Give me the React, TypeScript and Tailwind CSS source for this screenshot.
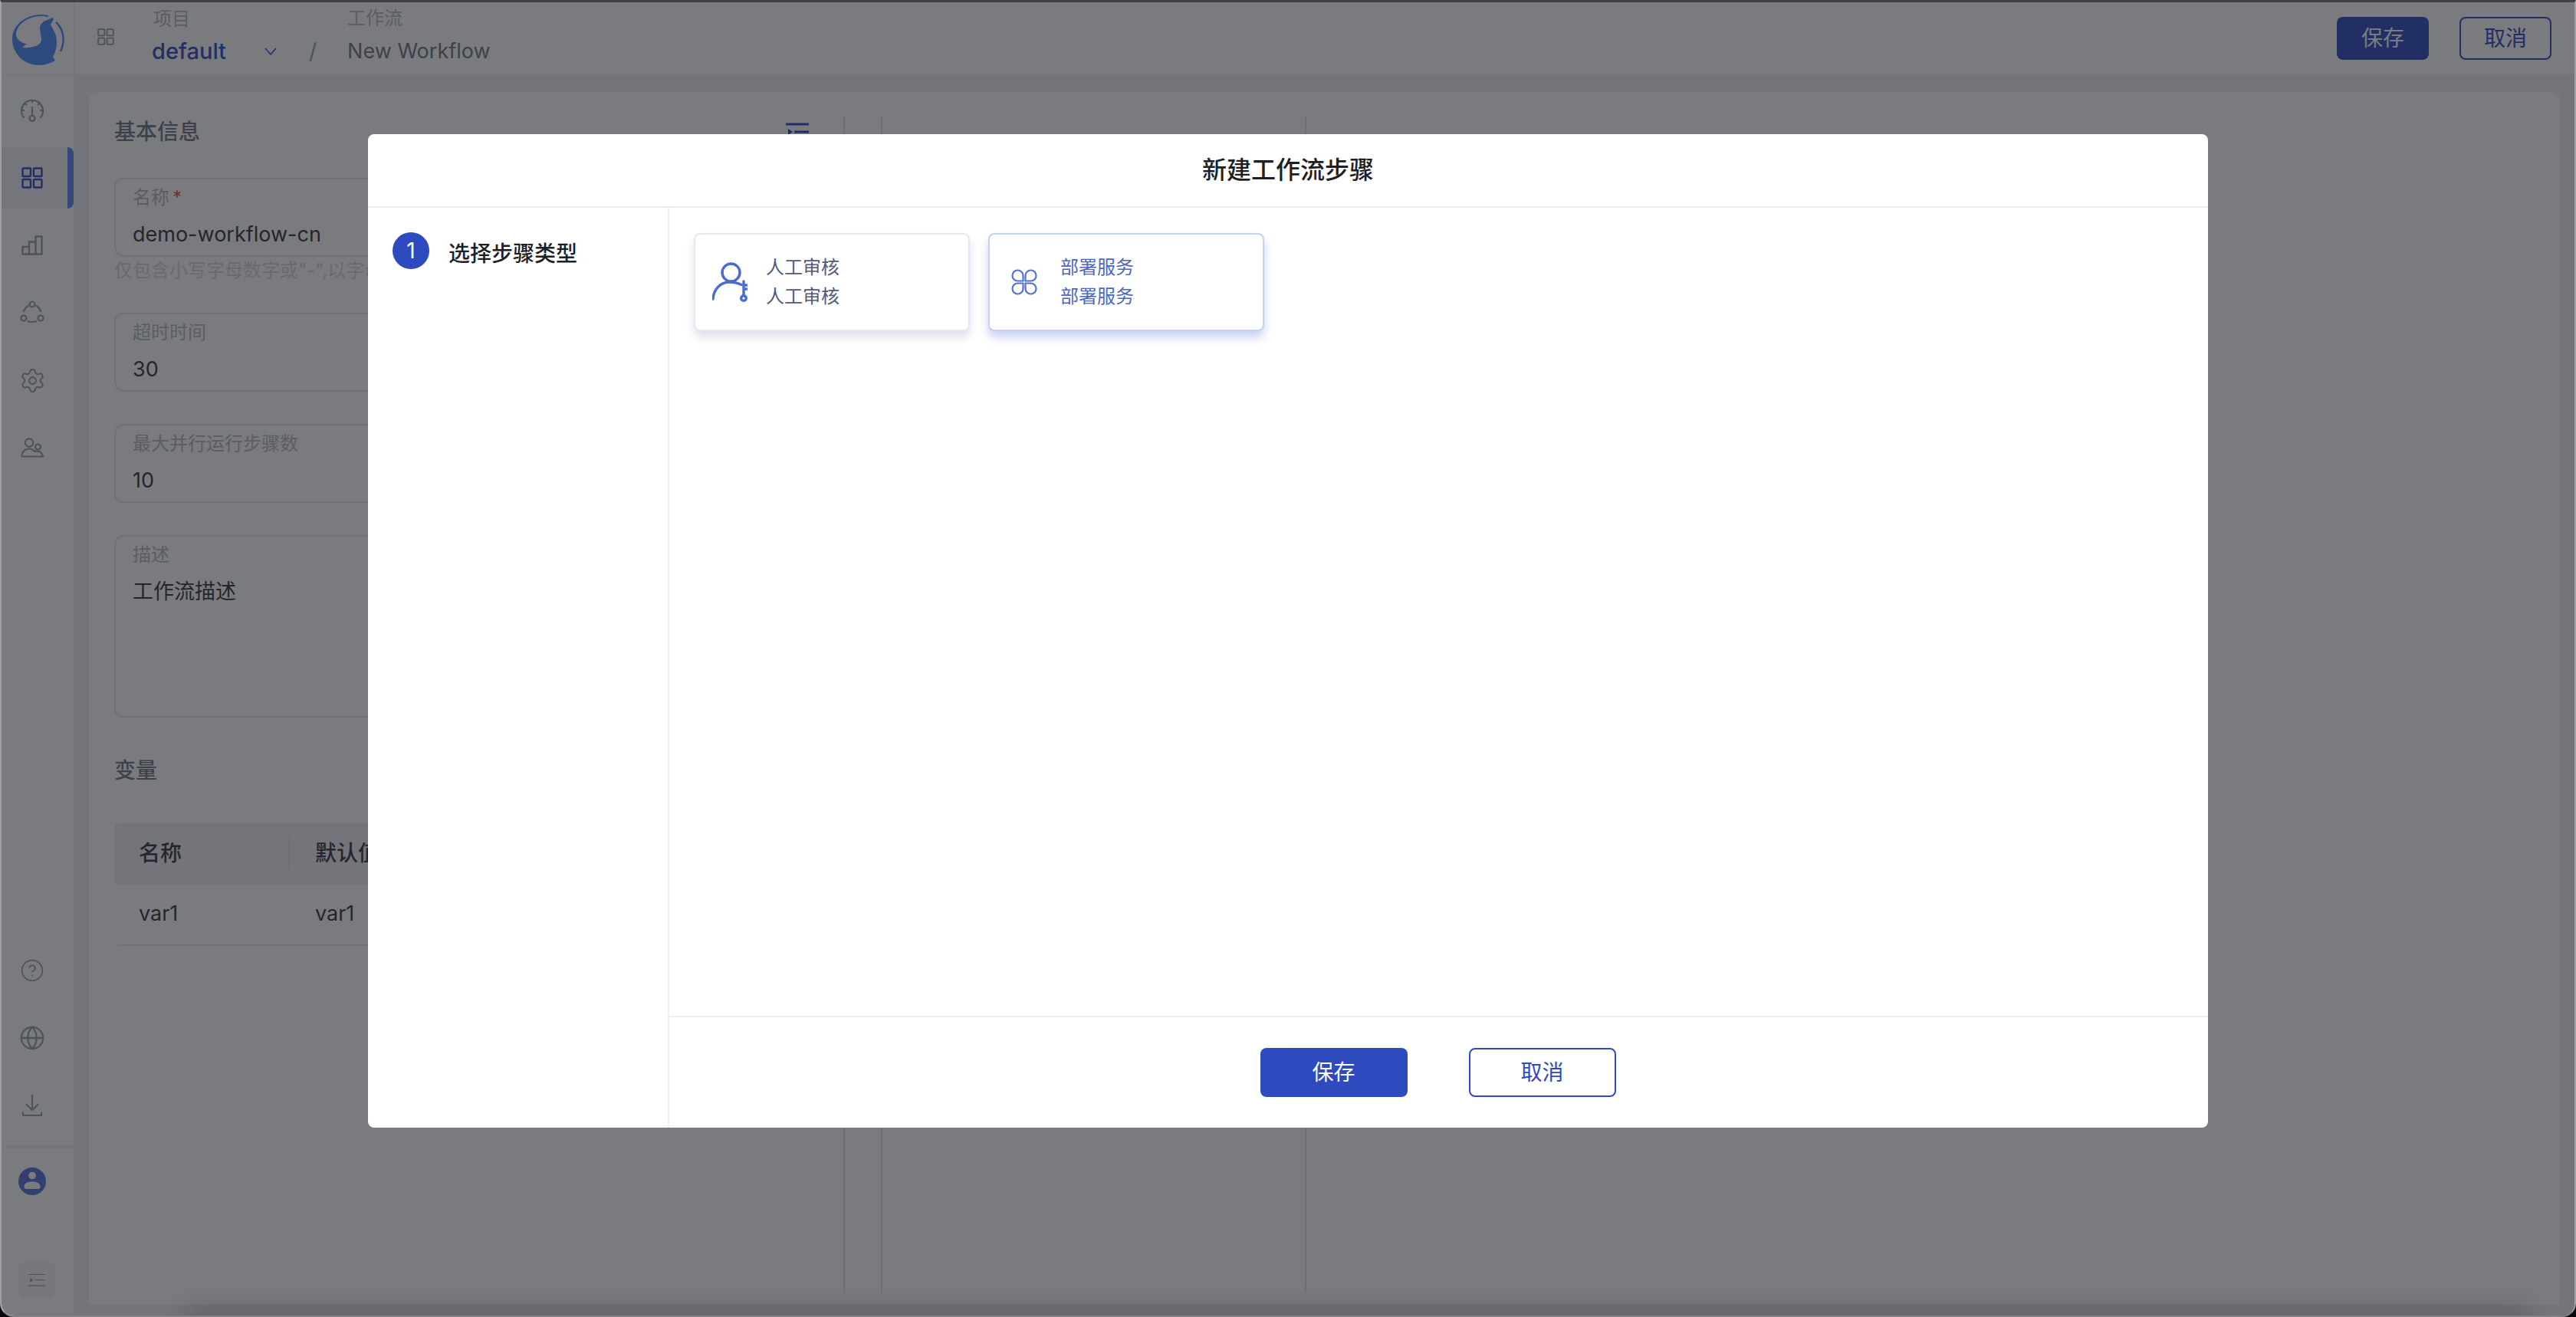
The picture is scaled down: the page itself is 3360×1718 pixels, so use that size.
import { CircleHelp, Globe, Settings } from 'lucide-react'
import type { ReactNode } from 'react'

// ── Icons ───────────────────────────────────────────────────────────────────
function Logo() {
  return (
    <svg width="96" height="95" viewBox="0 3 96 95">
      <path
        d="M61 20C40 15 14 28 14 51C14 70 30 85 48 85C56 85 63 83 70 79L67 74C72 66 73 55 71 47C69 40 66 36 64 32L68 25L66 23L60 26C55 27 50 31 50 37C50 42 52 47 52 52C52 58 44 63 27 62L33 57C27 57 20 52 19 46C18 32 38 17 61 22Z"
        fill="#4b8bf8"
      />
      <path d="M71 29C80 37 84 52 77 67" fill="none" stroke="#4b8bf8" strokeWidth="2.5" />
    </svg>
  )
}

function GridIcon({ size = 28, color = '#979ea4' }: { size?: number; color?: string }) {
  return (
    <svg width={size} height={size} viewBox="0 0 28 28" fill="none" stroke={color} strokeWidth="2.4">
      <rect x="1.5" y="1.5" width="10.5" height="10.5" rx="1" />
      <rect x="16" y="1.5" width="10.5" height="10.5" rx="1" />
      <rect x="1.5" y="16" width="10.5" height="10.5" rx="1" />
      <rect x="16" y="16" width="10.5" height="10.5" rx="1" />
    </svg>
  )
}

function GaugeIcon() {
  return (
    <svg width="32" height="32" viewBox="0 0 32 32" fill="none" stroke="#979ea4" strokeWidth="2.2">
      <path d="M5.5 26A14 14 0 1 1 26.500 26" />
      <circle cx="16" cy="26.500" r="3.500" />
      <path d="M16 23V11M16 2v4M2 16h4M26 16h4M6 6l3 3M26 6l-3 3" />
    </svg>
  )
}

function ChartIcon() {
  return (
    <svg width="28" height="26" viewBox="0 0 28 26" fill="none" stroke="#979ea4" strokeWidth="2.4" strokeLinejoin="round">
      <path d="M1.500 24.500V15H10V24.500ZM10 24.500V8.500H18.500V24.500ZM18.500 24.500V1.500H26.500V24.500Z" />
    </svg>
  )
}

function NetworkIcon() {
  return (
    <svg width="32" height="32" viewBox="0 0 32 32" fill="none" stroke="#979ea4" strokeWidth="2.2">
      <circle cx="16" cy="5" r="3.500" />
      <circle cx="5" cy="23" r="3.500" />
      <circle cx="27" cy="23" r="3.500" />
      <path d="M4.500 15Q6.500 9.500 11 6.500M21 6.500Q25.500 9.500 27.500 15M10 27Q16 29 22 27" />
    </svg>
  )
}

function UsersIcon() {
  return (
    <svg width="30" height="26" viewBox="0 0 30 26" fill="none" stroke="#979ea4" strokeWidth="2.2">
      <circle cx="11" cy="6.500" r="5.200" />
      <circle cx="22.500" cy="12" r="3.500" />
      <path d="M1 24.500C2 18 6 14.500 11 14.500C14 14.500 17 16 19 19M19 17.500C24 16.500 28 19 29 24.500H1" />
    </svg>
  )
}

function DownloadIcon() {
  return (
    <svg width="26" height="30" viewBox="0 0 26 30" fill="none" stroke="#979ea4" strokeWidth="2.2">
      <path d="M13 1V21M5 13.500L13 21L21 13.500M1 23.500V28H25V23.500" />
    </svg>
  )
}

function AvatarIcon() {
  return (
    <svg width="36" height="36" viewBox="0 0 36 36">
      <circle cx="18" cy="18" r="18" fill="#5773d9" />
      <circle cx="18" cy="10.500" r="4.800" fill="#fff" />
      <path d="M7.500 25C7.500 20.500 12 18.500 18 18.500S28.500 20.500 28.500 25C28.500 27 27.500 28 26 28H10C8.500 28 7.500 27 7.500 25Z" fill="#fff" />
    </svg>
  )
}

function IndentIcon({ color, width, stroke }: { color: string; width: number; stroke: number }) {
  return (
    <svg width={width} height={width * 0.8} viewBox="0 0 30 24" fill="none">
      <path d="M0 2H30M11 12H30M0 22H30" stroke={color} strokeWidth={stroke} />
      <path d="M3 8L9 12L3 16Z" fill={color} />
    </svg>
  )
}

function ReviewIcon() {
  return (
    <svg width="46" height="52" viewBox="0 0 46 52" fill="none" stroke="#4a6bd0" strokeWidth="3.400" strokeLinecap="round">
      <circle cx="24.500" cy="13.500" r="11.500" />
      <path d="M1 48C2 35 11 26 22 26C28 26 33 27 38 29.500" />
      <path d="M41 25V43M41 30H45M41 35H45" />
      <circle cx="41" cy="47" r="3.300" />
    </svg>
  )
}

function DeployIcon() {
  return (
    <svg width="34" height="34" viewBox="0 0 34 34" fill="none" stroke="#5571cf" strokeWidth="2.200">
      <path d="M15.500 15.500H8.500A7 7 0 1 1 15.500 8.500Z" />
      <path d="M18.500 15.500V8.500A7 7 0 1 1 25.500 15.500Z" />
      <path d="M15.500 18.500V25.500A7 7 0 1 1 8.500 18.500Z" />
      <path d="M18.500 18.500H25.500A7 7 0 1 1 18.500 25.500Z" />
    </svg>
  )
}

// ── Sidebar ─────────────────────────────────────────────────────────────────
function NavItem({ children, active }: { children: ReactNode; active?: boolean }) {
  return (
    <div
      className={
        active
          ? 'flex h-[80px] items-center justify-center rounded-r-[8px] border-r-[8px] border-[#5b82f5] bg-[#f3f4f6] pr-[6px]'
          : 'flex h-[80px] items-center justify-center pr-[14px]'
      }
    >
      {children}
    </div>
  )
}

function Sidebar() {
  return (
    <aside className="flex w-[94px] shrink-0 flex-col bg-white pt-[6px]">
      <div className="flex flex-col gap-[8px]">
        <NavItem><GaugeIcon /></NavItem>
        <NavItem active><GridIcon color="#2d4abf" /></NavItem>
        <NavItem><ChartIcon /></NavItem>
        <NavItem><NetworkIcon /></NavItem>
        <NavItem><Settings size={35} strokeWidth={1.4} color="#979ea4" /></NavItem>
        <NavItem><UsersIcon /></NavItem>
      </div>
      <div className="mt-auto flex flex-col gap-[8px]">
        <NavItem><CircleHelp size={32} strokeWidth={1.3} color="#979ea4" /></NavItem>
        <NavItem><Globe size={34} strokeWidth={1.6} color="#979ea4" /></NavItem>
        <NavItem><DownloadIcon /></NavItem>
      </div>
      <div className="mt-[13px] flex flex-col items-start border-t-2 border-[#f0f1f3] pb-[23px] pl-[22px] pt-[26px]">
        <AvatarIcon />
        <div className="mt-[87px] flex h-[47px] w-[48px] items-center justify-center rounded-[8px] bg-[#f6f7f8]">
          <IndentIcon color="#979ea4" width={22} stroke={1.500} />
        </div>
      </div>
    </aside>
  )
}

// ── Background form ─────────────────────────────────────────────────────────
function Field({ label, value, required, tall }: { label: string; value: string; required?: boolean; tall?: boolean }) {
  return (
    <div className={`rounded-[12px] border-2 border-[#e4e6ea] pl-[22px] pt-[9px] ${tall ? 'h-[238px]' : 'h-[103px]'}`}>
      <div className="text-[24px] leading-[30px] text-[#b5b8be]">
        {label}
        {required && <span className="ml-[4px] text-[#e5484d]">*</span>}
      </div>
      <div className="mt-[15px] text-[27px] leading-[36px] text-[#32343c]">{value}</div>
    </div>
  )
}

function FormColumn() {
  return (
    <div className="w-[986px] shrink-0 border-r-2 border-[#e2e3e6] pl-[33px] pr-[45px]">
      <div className="flex h-[40px] items-center justify-between text-[28px] font-medium text-[#70757f]">
        基本信息
        <IndentIcon color="#2d4abf" width={30} stroke={3} />
      </div>
      <div className="mt-[40px]">
        <Field label="名称" value="demo-workflow-cn" required />
      </div>
      <div className="mt-[3px] text-[24px] leading-[30px] text-[#d6d7da]">仅包含小写字母数字或"-",以字母开头</div>
      <div className="mt-[40px]">
        <Field label="超时时间" value="30" />
      </div>
      <div className="mt-[42px]">
        <Field label="最大并行运行步骤数" value="10" />
      </div>
      <div className="mt-[42px]">
        <Field label="描述" value="工作流描述" tall />
      </div>
      <div className="mt-[49px] text-[28px] font-medium leading-[40px] text-[#70757f]">变量</div>
      <div className="mt-[48px]">
        <div className="flex h-[80px] items-center rounded-t-[8px] bg-[#f0f1f3] text-[28px] font-medium text-[#32343c]">
          <div className="flex h-[40px] w-[229px] items-center border-r-2 border-[#e2e3e6] pl-[32px]">名称</div>
          <div className="pl-[33px]">默认值</div>
        </div>
        <div className="ml-[4px] flex h-[81px] items-center border-b-2 border-[#e8e9ec] text-[27px] text-[#32343c]">
          <div className="w-[225px] pl-[28px]">var1</div>
          <div className="pl-[33px]">var1</div>
        </div>
      </div>
    </div>
  )
}

// ── Dialog ──────────────────────────────────────────────────────────────────
function StepCard({ title, icon, active }: { title: string; icon: ReactNode; active?: boolean }) {
  return (
    <div
      className={
        active
          ? 'flex h-[128px] w-[360px] items-center rounded-[8px] border-2 border-[#c5d3f0] bg-white pl-[28px] shadow-[0_8px_12px_rgba(60,90,200,0.28)]'
          : 'flex h-[128px] w-[360px] items-center rounded-[8px] border-2 border-[#e2e8f2] bg-white pl-[22px] shadow-[0_8px_12px_rgba(30,50,110,0.14)]'
      }
    >
      <div className={active ? 'flex w-[64px] items-center' : 'flex w-[70px] items-center'}>{icon}</div>
      <div className={active ? 'text-[24px] leading-[38px] text-[#4b66c4]' : 'text-[24px] leading-[38px] text-[#4f5a7c]'}>
        <div>{title}</div>
        <div>{title}</div>
      </div>
    </div>
  )
}

function Dialog() {
  return (
    <div className="flex h-[1296px] w-[2400px] flex-col overflow-hidden rounded-[8px] bg-white">
      <div className="flex h-[96px] shrink-0 items-center justify-center border-b-2 border-[#eeeeee] text-[32px] font-medium text-[#1d1f25]">
        新建工作流步骤
      </div>
      <div className="flex min-h-0 flex-1">
        <div className="w-[393px] shrink-0 border-r-2 border-[#eff0f2] pl-[32px] pt-[32px]">
          <div className="flex items-start">
            <div className="flex size-[48px] items-center justify-center rounded-full bg-[#2d4abf] text-[28px] text-white">1</div>
            <div className="ml-[25px] mt-[6px] text-[28px] font-medium leading-[44px] text-[#1d1f25]">选择步骤类型</div>
          </div>
        </div>
        <div className="flex min-w-0 flex-1 flex-col">
          <div className="flex flex-1 items-start gap-[24px] pl-[32px] pt-[33px]">
            <StepCard title="人工审核" icon={<ReviewIcon />} />
            <StepCard title="部署服务" icon={<DeployIcon />} active />
          </div>
          <div className="flex h-[146px] shrink-0 items-center justify-center gap-[80px] border-t-2 border-[#eeeeee] pr-[2px] text-[28px]">
            <button className="h-[64px] w-[192px] rounded-[8px] bg-[#2d4abf] text-white">保存</button>
            <button className="h-[64px] w-[192px] rounded-[8px] border-2 border-[#2d4abf] text-[#2d4abf]">取消</button>
          </div>
        </div>
      </div>
    </div>
  )
}

// ── Page ────────────────────────────────────────────────────────────────────
export default function App() {
  return (
    <div className="h-[1718px] w-[3360px] overflow-hidden bg-[#08080b] font-['Inter','Noto_Sans_CJK_SC',sans-serif]">
      <div className="h-full w-full overflow-hidden rounded-b-[18px] border-x-2 border-b-2 border-t-[3px] border-x-[#a0a1a4] border-b-[#808185] border-t-[#3f4045]">
        <div className="relative flex h-full flex-col overflow-hidden bg-[#f0f1f3]">
          <header className="flex h-[95px] shrink-0 items-center border-b border-[#eeeff1] bg-white">
            <div className="h-full w-[96px] shrink-0 border-r-2 border-[#f0f1f3]">
              <Logo />
            </div>
            <div className="ml-[29px] mb-[4px]">
              <GridIcon size={22} />
            </div>
            <div className="mb-[6px] ml-[51px] flex flex-col">
              <div className="text-[24px] leading-[30px] text-[#b5b8be]">项目</div>
              <div className="mt-[9px] flex items-center">
                <div className="-ml-[2px] w-[147px] text-[29px] font-medium leading-[36px] text-[#2d4abf]">default</div>
                <svg width="16" height="10" viewBox="0 0 16 10" fill="none" stroke="#2d4abf" strokeWidth="1.500">
                  <path d="M1 1L8 9L15 1" />
                </svg>
                <div className="ml-[42px] text-[28px] leading-[36px] text-[#979ea4]">/</div>
              </div>
            </div>
            <div className="mb-[6px] ml-[40px] flex flex-col">
              <div className="text-[24px] leading-[30px] text-[#b5b8be]">工作流</div>
              <div className="mt-[10px] text-[27px] leading-[36px] text-[#70757f]">New Workflow</div>
            </div>
            <div className="ml-auto flex gap-[40px] pr-[30px] text-[28px]">
              <button className="h-[56px] w-[120px] rounded-[8px] bg-[#2d4abf] text-white">保存</button>
              <button className="h-[56px] w-[120px] rounded-[8px] border-2 border-[#2d4abf] text-[#2d4abf]">取消</button>
            </div>
          </header>
          <div className="flex min-h-0 flex-1">
            <Sidebar />
            <main className="ml-[20px] mr-[19px] mt-[22px] mb-[14px] flex min-w-0 flex-1 rounded-t-[12px] bg-white pb-[16px] pt-[32px]">
              <FormColumn />
              <div className="w-[49px] shrink-0 border-r-2 border-[#e2e3e6]" />
              <div className="w-[553px] shrink-0 border-r-2 border-[#e2e3e6]" />
            </main>
          </div>
          {/* Window shadow along the bottom edge */}
          <div className="absolute -bottom-[18px] left-[240px] right-[60px] h-[30px] bg-black/20 blur-[16px]" />
          {/* Mask + dialog */}
          <div className="absolute inset-0 flex items-start justify-center bg-[#191b23]/58 pt-[172px]">
            <Dialog />
          </div>
        </div>
      </div>
    </div>
  )
}
